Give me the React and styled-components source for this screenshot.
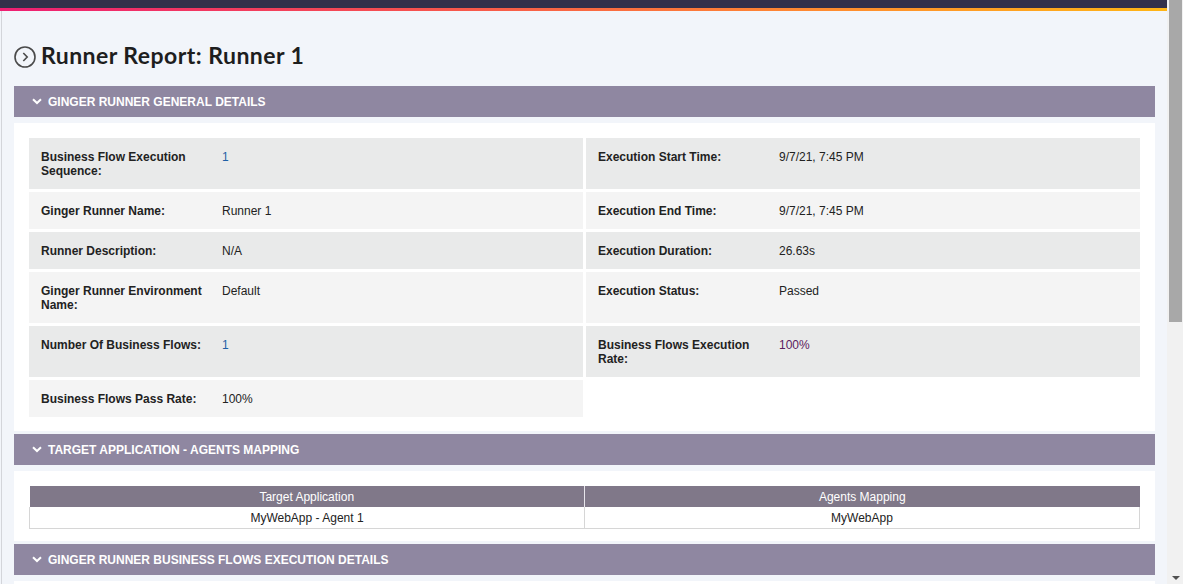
import React from "react";
import styled, { createGlobalStyle } from "styled-components";

const GlobalStyle = createGlobalStyle`
  html, body { margin: 0; padding: 0; }
  body {
    font-family: "Liberation Sans", Arial, sans-serif;
    background: #f2f5fa;
    overflow: hidden;
  }
`;

const Frame = styled.div`
  display: flex;
  width: 1183px;
  height: 584px;
  overflow: hidden;
`;

const Page = styled.div`
  flex: 1;
  min-width: 0;
  display: flex;
  flex-direction: column;
  background: #f2f5fa;
`;

const TopBar = styled.div`
  flex: 0 0 8px;
  background: #33304a;
`;

const AccentStripe = styled.div`
  flex: 0 0 3px;
  background: linear-gradient(to right, #ee1f73 0%, #f6504f 35%, #ff8a30 70%, #ffb515 100%);
`;

const Body = styled.main`
  flex: 1;
  margin-left: 1px;
  border-left: 1px solid #d3d5da;
  padding: 0 12px;
  overflow: hidden;
`;

const TitleRow = styled.div`
  display: flex;
  align-items: flex-start;
  gap: 5px;
  margin: 31px 0 18px;
`;

const TitleIcon = styled.svg`
  flex: 0 0 auto;
  margin-top: 4px;
`;

const Title = styled.h1`
  margin: 0;
  font-family: Lato, "Open Sans", sans-serif;
  font-weight: 700;
  font-size: 23px;
  line-height: 26px;
  letter-spacing: 0.45px;
  color: #1e1e1e;
`;

const SectionHeader = styled.div`
  height: 31px;
  display: flex;
  align-items: center;
  gap: 6px;
  padding-left: 18px;
  margin-bottom: 6px;
  background: #8f87a1;
  color: #ffffff;
  font-weight: bold;
  font-size: 12px;
  text-transform: uppercase;
`;

const Panel = styled.section`
  background: #ffffff;
  padding: ${(p) => p.$pad};
  margin-bottom: 3px;
  min-height: ${(p) => p.$minHeight || "0"};
`;

const DetailsGrid = styled.div`
  display: grid;
  grid-template-columns: 1fr 1fr;
  gap: 3px;
`;

const Cell = styled.div`
  display: flex;
  background: ${(p) => (p.$shade ? "#e9eaea" : "#f4f4f4")};
  padding: 12px 12px 11px;
  font-size: 12px;
  line-height: 14px;
  color: #222222;
`;

const Label = styled.div`
  flex: 0 0 170px;
  margin-right: 11px;
  font-weight: bold;
`;

const Value = styled.div`
  color: ${(p) => p.$color || "#222222"};
`;

const MappingTable = styled.table`
  width: 100%;
  border-collapse: collapse;
  font-size: 12px;
  table-layout: fixed;
`;

const HeadCell = styled.th`
  background: #807889;
  color: #ffffff;
  font-weight: normal;
  height: 21px;
  padding: 0;
  line-height: 14px;
  border-left: ${(p) => (p.$divider ? "1px solid #e8e6ec" : "0")};
`;

const DataCell = styled.td`
  text-align: center;
  color: #222222;
  height: 21px;
  padding: 0;
  line-height: 14px;
  border: 1px solid #d6d6d6;
  border-top: 0;
`;

const Scrollbar = styled.div`
  flex: 0 0 16px;
  background: #f1f1f1;
  display: flex;
  flex-direction: column;
  justify-content: space-between;
`;

const Thumb = styled.div`
  margin-left: 2px;
  width: 13px;
  height: 322px;
  background: #a8a8a8;
`;

const ArrowDown = styled.div`
  align-self: center;
  margin-bottom: 4px;
  margin-left: 1px;
  width: 0;
  height: 0;
  border-left: 4px solid transparent;
  border-right: 4px solid transparent;
  border-top: 4px solid #505050;
`;

const Chevron = () => (
  <svg width="10" height="7" viewBox="0 0 10 7">
    <path d="M1 1.2 L5 5 L9 1.2" fill="none" stroke="#ffffff" strokeWidth="2" />
  </svg>
);

const details = [
  [
    { label: "Business Flow Execution Sequence:", value: "1", color: "#1d5fa6" },
    { label: "Execution Start Time:", value: "9/7/21, 7:45 PM" },
  ],
  [
    { label: "Ginger Runner Name:", value: "Runner 1" },
    { label: "Execution End Time:", value: "9/7/21, 7:45 PM" },
  ],
  [
    { label: "Runner Description:", value: "N/A" },
    { label: "Execution Duration:", value: "26.63s" },
  ],
  [
    { label: "Ginger Runner Environment Name:", value: "Default" },
    { label: "Execution Status:", value: "Passed" },
  ],
  [
    { label: "Number Of Business Flows:", value: "1", color: "#1d5fa6" },
    { label: "Business Flows Execution Rate:", value: "100%", color: "#5a2060" },
  ],
  [{ label: "Business Flows Pass Rate:", value: "100%" }],
];

export default function App() {
  return (
    <>
      <GlobalStyle />
      <Frame>
        <Page>
          <TopBar />
          <AccentStripe />
          <Body>
            <TitleRow>
              <TitleIcon width="22" height="22" viewBox="0 0 22 22">
                <circle cx="11" cy="11" r="10" fill="none" stroke="#4a4a4a" strokeWidth="1.6" />
                <path d="M9.3 7 L13.2 11 L9.3 15" fill="none" stroke="#4a4a4a" strokeWidth="1.6" />
              </TitleIcon>
              <Title>Runner Report: Runner 1</Title>
            </TitleRow>

            <SectionHeader>
              <Chevron />
              <span>Ginger Runner General Details</span>
            </SectionHeader>
            <Panel $pad="15px 15px 14px">
              <DetailsGrid>
                {details.map((row, ri) =>
                  row.map((item, ci) => (
                    <Cell key={`${ri}-${ci}`} $shade={ri % 2 === 0}>
                      <Label>{item.label}</Label>
                      <Value $color={item.color}>{item.value}</Value>
                    </Cell>
                  ))
                )}
              </DetailsGrid>
            </Panel>

            <SectionHeader>
              <Chevron />
              <span>Target Application - Agents Mapping</span>
            </SectionHeader>
            <Panel $pad="15px 15px 12px">
              <MappingTable>
                <thead>
                  <tr>
                    <HeadCell>Target Application</HeadCell>
                    <HeadCell $divider>Agents Mapping</HeadCell>
                  </tr>
                </thead>
                <tbody>
                  <tr>
                    <DataCell>MyWebApp - Agent 1</DataCell>
                    <DataCell>MyWebApp</DataCell>
                  </tr>
                </tbody>
              </MappingTable>
            </Panel>

            <SectionHeader>
              <Chevron />
              <span>Ginger Runner Business Flows Execution Details</span>
            </SectionHeader>
            <Panel $pad="0" $minHeight="60px" />
          </Body>
        </Page>
        <Scrollbar>
          <Thumb />
          <ArrowDown />
        </Scrollbar>
      </Frame>
    </>
  );
}
